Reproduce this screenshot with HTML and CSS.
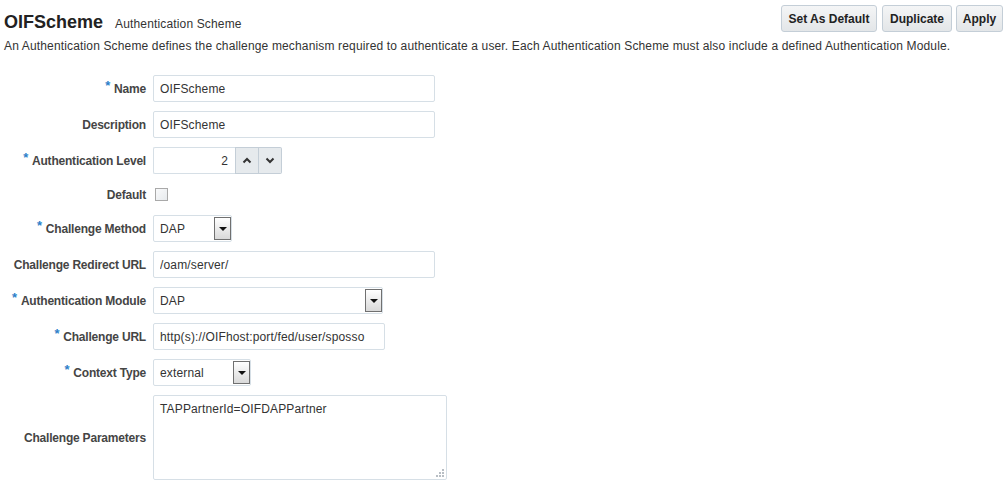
FILE: index.html
```html
<!DOCTYPE html>
<html lang="en">
<head>
  <meta charset="UTF-8">
  <meta name="viewport" content="width=device-width, initial-scale=1.0">
  <title>OIFScheme - Authentication Scheme</title>
  <link rel="stylesheet" href="styles.css">
</head>
<body>

  <div class="header">
    <div class="title-row">
      <h1>OIFScheme</h1>
      <span class="subtitle">Authentication Scheme</span>
    </div>
    <div class="actions">
      <button class="btn btn-default">Set As Default</button>
      <button class="btn btn-duplicate">Duplicate</button>
      <button class="btn btn-apply">Apply</button>
    </div>
  </div>
  <p class="intro">An Authentication Scheme defines the challenge mechanism required to authenticate a user. Each Authentication Scheme must also include a defined Authentication Module.</p>

  <form class="scheme-form">
    <label class="field-label"><span class="req">*</span>Name</label>
    <div class="field"><input class="text-input wide" type="text" value="OIFScheme"></div>

    <label class="field-label">Description</label>
    <div class="field"><input class="text-input wide" type="text" value="OIFScheme"></div>

    <label class="field-label"><span class="req">*</span>Authentication Level</label>
    <div class="field">
      <div class="spinner">
        <input class="spin-value" type="text" value="2">
        <span class="spin-btn">
          <svg width="10" height="7" viewBox="0 0 10 7"><path d="M1.5 5.5 L5 2 L8.5 5.5" fill="none" stroke="#333" stroke-width="2"/></svg>
        </span>
        <span class="spin-btn">
          <svg width="10" height="7" viewBox="0 0 10 7"><path d="M1.5 1.5 L5 5 L8.5 1.5" fill="none" stroke="#333" stroke-width="2"/></svg>
        </span>
      </div>
    </div>

    <label class="field-label short">Default</label>
    <div class="field short"><span class="checkbox"></span></div>

    <label class="field-label"><span class="req">*</span>Challenge Method</label>
    <div class="field">
      <div class="select method"><span class="select-text">DAP</span><span class="drop"><i></i></span></div>
    </div>

    <label class="field-label">Challenge Redirect URL</label>
    <div class="field"><input class="text-input wide" type="text" value="/oam/server/"></div>

    <label class="field-label"><span class="req">*</span>Authentication Module</label>
    <div class="field">
      <div class="select module"><span class="select-text">DAP</span><span class="drop"><i></i></span></div>
    </div>

    <label class="field-label"><span class="req">*</span>Challenge URL</label>
    <div class="field"><input class="text-input url" type="text" value="http(s)://OIFhost:port/fed/user/sposso"></div>

    <label class="field-label"><span class="req">*</span>Context Type</label>
    <div class="field">
      <div class="select context"><span class="select-text">external</span><span class="drop"><i></i></span></div>
    </div>

    <label class="field-label">Challenge Parameters</label>
    <div class="field">
      <div class="area">
        <div class="area-text">TAPPartnerId=OIFDAPPartner</div>
        <svg class="grip" width="10" height="10" viewBox="0 0 10 10">
          <rect x="7" y="1" width="2" height="2" fill="#b8bec4"/>
          <rect x="4" y="4" width="2" height="2" fill="#b8bec4"/>
          <rect x="7" y="4" width="2" height="2" fill="#b8bec4"/>
          <rect x="1" y="7" width="2" height="2" fill="#b8bec4"/>
          <rect x="4" y="7" width="2" height="2" fill="#b8bec4"/>
          <rect x="7" y="7" width="2" height="2" fill="#b8bec4"/>
        </svg>
      </div>
    </div>
  </form>

</body>
</html>
```

FILE: styles.css
```css
body {
  font-family: 'Liberation Sans', Arial, sans-serif;
  font-size: 12px;
  letter-spacing: 0.15px;
  margin: 0;
  padding: 0 4px;
  background-color: #ffffff;
  color: #333333;
}

.header {
  display: flex;
  justify-content: space-between;
  align-items: flex-start;
}

.title-row {
  display: flex;
  align-items: baseline;
  padding-top: 11px;
  line-height: 22px;
}

h1 {
  margin: 0 12px 0 0;
  font-size: 18px;
  font-weight: bold;
  letter-spacing: 0;
  color: #222222;
}

.subtitle {
  font-size: 12px;
  color: #333333;
}

.intro {
  margin: 3px 0 0 0;
  line-height: 16px;
  white-space: nowrap;
}

.actions {
  display: flex;
  gap: 5px;
  margin-top: 5px;
}

.btn {
  height: 27px;
  padding: 0;
  font-family: inherit;
  font-size: 12px;
  font-weight: bold;
  letter-spacing: 0;
  color: #222222;
  white-space: nowrap;
  border: 1px solid #c4ced7;
  border-radius: 3px;
  background: linear-gradient(#f4f5f6, #e3e6e8);
  cursor: pointer;
}

.btn-default {
  width: 96px;
}

.btn-duplicate {
  width: 70px;
}

.btn-apply {
  width: 47px;
  margin-left: -1px;
}

.scheme-form {
  display: grid;
  grid-template-columns: 142px 1fr;
  column-gap: 7px;
  row-gap: 9px;
  margin-top: 21px;
  align-items: center;
}

.field-label {
  text-align: right;
  font-weight: bold;
  color: #454545;
  letter-spacing: -0.2px;
  white-space: nowrap;
}

.req {
  color: #2d7fc9;
  font-size: 13px;
  position: relative;
  top: -3px;
  margin-right: 4px;
}

.field {
  display: flex;
  align-items: center;
}

.field.short {
  height: 23px;
}

.text-input {
  box-sizing: border-box;
  height: 27px;
  padding: 0 6px;
  font-family: inherit;
  font-size: 12px;
  letter-spacing: 0.15px;
  color: #333333;
  border: 1px solid #d6dfe6;
  border-radius: 2px;
  outline: none;
}

.text-input.wide {
  width: 282px;
}

.text-input.url {
  width: 232px;
}

.spinner {
  display: flex;
  height: 27px;
}

.spin-value {
  box-sizing: border-box;
  width: 82px;
  height: 27px;
  padding: 0 7px;
  text-align: right;
  font-family: inherit;
  font-size: 12px;
  color: #333333;
  border: 1px solid #d6dfe6;
  border-right: none;
  border-radius: 2px 0 0 2px;
  outline: none;
}

.spin-btn {
  box-sizing: border-box;
  width: 24px;
  display: flex;
  align-items: center;
  justify-content: center;
  background: #e6eaed;
  border: 1px solid #c4ced7;
}

.spin-btn + .spin-btn {
  border-left: none;
  width: 23px;
  border-radius: 0 2px 2px 0;
}

.checkbox {
  box-sizing: border-box;
  width: 13px;
  height: 13px;
  margin-left: 2px;
  border: 1px solid #a9a9a9;
  background: linear-gradient(135deg, #f9fafb, #e7eaed);
}

.select {
  box-sizing: border-box;
  display: flex;
  align-items: center;
  height: 27px;
  padding: 1px 0 1px 6px;
  border: 1px solid #d6dfe6;
  border-radius: 2px;
}

.select.method {
  width: 79px;
}

.select.module {
  width: 230px;
}

.select.context {
  width: 98px;
}

.select-text {
  flex: 1;
}

.drop {
  box-sizing: border-box;
  width: 17px;
  height: 100%;
  display: flex;
  align-items: center;
  justify-content: center;
  border: 1px solid #707070;
  background: linear-gradient(#ffffff, #d9d9d9);
}

.drop i {
  width: 0;
  height: 0;
  border-left: 4px solid transparent;
  border-right: 4px solid transparent;
  border-top: 4px solid #111111;
}

.area {
  position: relative;
  box-sizing: border-box;
  width: 294px;
  height: 85px;
  padding: 6px 6px;
  border: 1px solid #d6dfe6;
  border-radius: 2px;
}

.grip {
  position: absolute;
  right: 1px;
  bottom: 1px;
}
```
